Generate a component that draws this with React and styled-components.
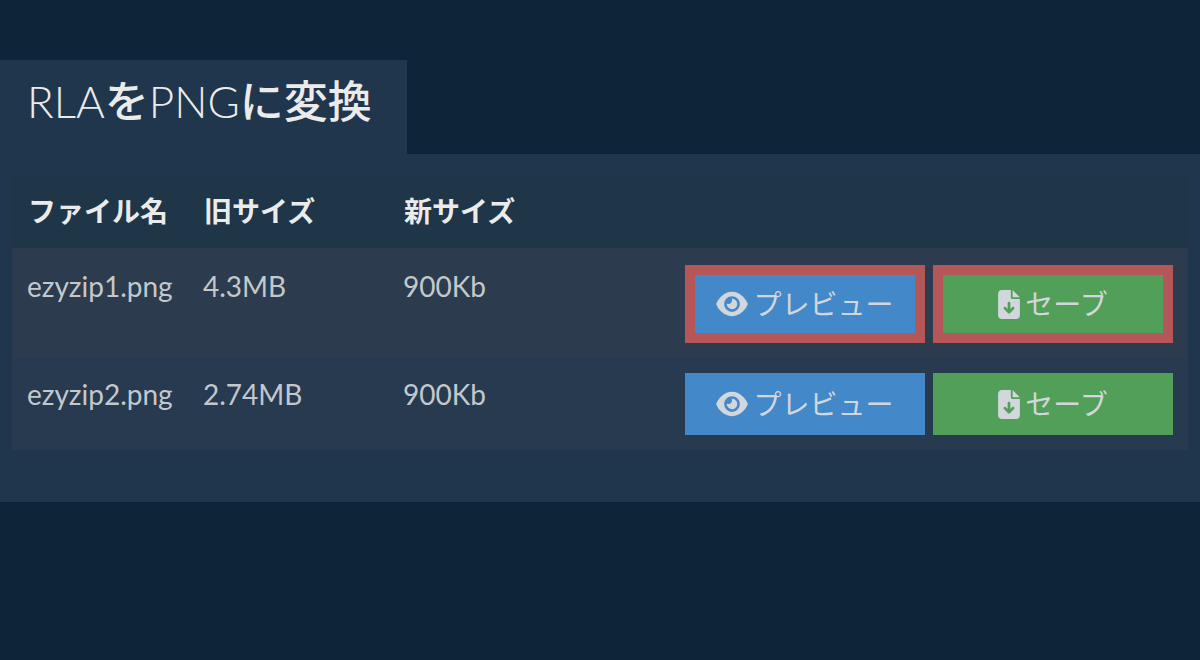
import React from 'react';
import styled, { createGlobalStyle } from 'styled-components';
import { FaEye, FaFileArrowDown } from 'react-icons/fa6';

const GlobalStyle = createGlobalStyle`
	body {
		margin: 0;
		background: #0e2438;
		color: #ebebeb;
		font-family: Lato, "Noto Sans CJK JP", sans-serif;
		font-size: 28px;
		line-height: 42px;
	}
`;

const Page = styled.main`
	padding-top: 60px;
`;

const Tab = styled.h1`
	display: inline-block;
	vertical-align: top;
	box-sizing: border-box;
	margin: 0;
	padding: 14px 35px 26px 27px;
	background: #20364d;
	font-size: 44px;
	font-weight: 300;
	line-height: 54px;
`;

const Kana = styled.span`
	font-weight: 500;
`;

const Panel = styled.section`
	padding: 20px 12px 52px;
	background: #20364d;
`;

const FileTable = styled.table`
	width: 100%;
	border-collapse: separate;
	border-spacing: 0;
`;

const HeadRow = styled.tr`
	background: #1f3548;
`;

const HeadCell = styled.th`
	padding: 16px;
	border-bottom: 2px solid #2c3b4d;
	text-align: left;
	font-weight: 700;
`;

const Row = styled.tr`
	background: ${props => props.$odd ? '#2c3b4d' : '#273a50'};
`;

const Cell = styled.td`
	padding: 15px;
	vertical-align: top;
	color: #c3c8cc;
	white-space: nowrap;
`;

const Actions = styled.div`
	display: flex;
	justify-content: flex-end;
	gap: 8px;
`;

const ActionButton = styled.button`
	display: flex;
	align-items: center;
	justify-content: center;
	gap: 5px;
	box-sizing: border-box;
	width: 240px;
	padding: ${props => props.$marked ? '8px' : '10px'} 0;
	border: ${props => props.$marked ? '10px solid #b55658' : '0'};
	background: ${props => props.$save ? '#519f59' : '#4388c9'};
	color: #d2d7dd;
	font: inherit;
	cursor: pointer;
`;

const EyeIcon = styled(FaEye)`
	width: 32px;
	height: 28px;
`;

const SaveIcon = styled(FaFileArrowDown)`
	width: 22px;
	height: 29px;
`;

const files = [
	{ name: 'ezyzip1.png', oldSize: '4.3MB', newSize: '900Kb', marked: true },
	{ name: 'ezyzip2.png', oldSize: '2.74MB', newSize: '900Kb', marked: false },
];

const FileRow = ({ file, odd }) => (
	<Row $odd={odd}>
		<Cell>{file.name}</Cell>
		<Cell>{file.oldSize}</Cell>
		<Cell>{file.newSize}</Cell>
		<Cell>
			<Actions>
				<ActionButton type="button" $marked={file.marked}>
					<EyeIcon />
					プレビュー
				</ActionButton>
				<ActionButton type="button" $save $marked={file.marked}>
					<SaveIcon />
					セーブ
				</ActionButton>
			</Actions>
		</Cell>
	</Row>
);

const App = () => (
	<Page>
		<GlobalStyle />
		<Tab>RLA<Kana>を</Kana>PNG<Kana>に変換</Kana></Tab>
		<Panel>
			<FileTable>
				<colgroup>
					<col width="176" />
					<col width="200" />
					<col width="200" />
					<col />
				</colgroup>
				<thead>
					<HeadRow>
						<HeadCell>ファイル名</HeadCell>
						<HeadCell>旧サイズ</HeadCell>
						<HeadCell>新サイズ</HeadCell>
						<HeadCell />
					</HeadRow>
				</thead>
				<tbody>
					{files.map((file, i) => (
						<FileRow key={file.name} file={file} odd={i % 2 === 0} />
					))}
				</tbody>
			</FileTable>
		</Panel>
	</Page>
);

export default App;
